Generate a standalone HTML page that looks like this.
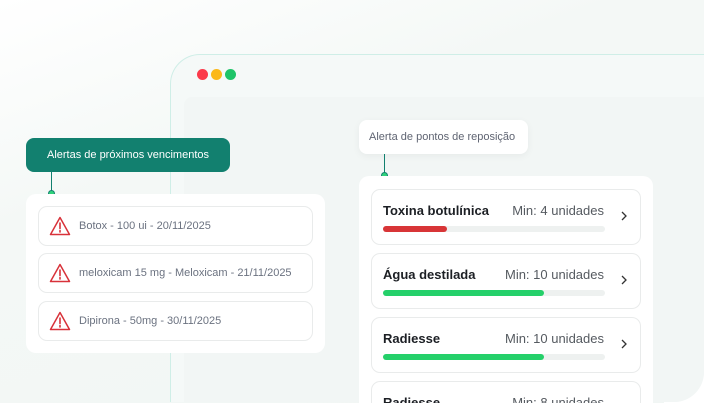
<!DOCTYPE html>
<html><head><meta charset="utf-8"><style>
*{margin:0;padding:0;box-sizing:border-box}
html,body{width:704px;height:403px;overflow:hidden}
body{position:relative;font-family:"Liberation Sans",sans-serif;background:linear-gradient(160deg,#fff 0%,#f4f8f6 35%,#f1f6f4 100%)}
.wc{position:absolute;right:0;bottom:0;width:40px;height:40px;background:#fff}
.frame{position:absolute;left:170px;top:54px;width:534px;height:348px;border:1px solid #cfeee7;border-right:none;border-bottom:none;border-radius:30px 0 30px 0;background:#f5f9f8;overflow:hidden}
.inner{position:absolute;left:13px;top:42px;right:0;bottom:0;background:#f2f6f5;border-radius:8px 0 0 0}
.dot{position:absolute;top:69px;width:11px;height:11px;border-radius:50%}
.tip{position:absolute;border-radius:8px;font-size:11px}
.card{position:absolute;background:#fff;border-radius:10px;overflow:hidden}
.it{position:absolute;left:12px;right:12px;border:1px solid #e9ebeb;border-radius:9px;background:#fff}
.l .it{height:40px;font-size:11px;color:#6b7280}
.l .it svg{position:absolute;left:10px;top:9px}
.l .it span{position:absolute;left:40px;top:13px}
.r .it{height:56px}
.r b{position:absolute;left:11px;top:13px;font-size:13px;color:#1c1f24}
.r .m{position:absolute;right:36px;top:13px;font-size:13px;color:#555a60}
.bar{position:absolute;left:11px;top:36px;width:222px;height:6px;border-radius:3px;background:#eef1f0}
.bar i{display:block;height:6px;border-radius:3px}
.ch{position:absolute;right:12px;top:20px}
.line{position:absolute;width:1px;background:#12806f}
.pin{position:absolute;width:7px;height:7px;border-radius:50%;background:#2fd27a;border:1px solid #12806f}
</style></head><body>
<div class="wc"></div>
<div class="frame"><div class="inner"></div></div>
<div class="dot" style="left:197px;background:#fb3a4a"></div>
<div class="dot" style="left:211px;background:#fbb818"></div>
<div class="dot" style="left:225px;background:#1ec468"></div>

<div class="tip" style="left:26px;top:138px;width:204px;height:34px;background:#12806f;color:#fff;line-height:34px;text-align:center">Alertas de próximos vencimentos</div>
<div class="line" style="left:51px;top:172px;height:20px"></div>
<div class="pin" style="left:48px;top:190px"></div>

<div class="card l" style="left:26px;top:194px;width:299px;height:159px">
<div class="it" style="top:12px"><svg width="22" height="20" viewBox="0 0 22 20"><path d="M11 1.5 L20.5 18.5 H1.5 Z" fill="none" stroke="#d8323a" stroke-width="1.5" stroke-linejoin="round"/><path d="M11 7v5.5M11 14.5v1.5" stroke="#d8323a" stroke-width="1.6" stroke-linecap="round"/></svg><span>Botox - 100 ui - 20/11/2025</span></div>
<div class="it" style="top:59px"><svg width="22" height="20" viewBox="0 0 22 20"><path d="M11 1.5 L20.5 18.5 H1.5 Z" fill="none" stroke="#d8323a" stroke-width="1.5" stroke-linejoin="round"/><path d="M11 7v5.5M11 14.5v1.5" stroke="#d8323a" stroke-width="1.6" stroke-linecap="round"/></svg><span>meloxicam 15 mg - Meloxicam - 21/11/2025</span></div>
<div class="it" style="top:107px"><svg width="22" height="20" viewBox="0 0 22 20"><path d="M11 1.5 L20.5 18.5 H1.5 Z" fill="none" stroke="#d8323a" stroke-width="1.5" stroke-linejoin="round"/><path d="M11 7v5.5M11 14.5v1.5" stroke="#d8323a" stroke-width="1.6" stroke-linecap="round"/></svg><span>Dipirona - 50mg - 30/11/2025</span></div>
</div>

<div class="tip" style="left:359px;top:120px;width:169px;height:34px;background:#fff;color:#5f6472;font-size:11px;line-height:34px;padding-left:10px;box-shadow:0 2px 8px rgba(0,0,0,.05)">Alerta de pontos de reposição</div>
<div class="line" style="left:384px;top:154px;height:20px"></div>
<div class="pin" style="left:381px;top:172px"></div>

<div class="card r" style="left:359px;top:176px;width:294px;height:227px;border-radius:10px 10px 0 0">
<div class="it" style="top:13px"><b>Toxina botulínica</b><span class="m">Min: 4 unidades</span><div class="bar"><i style="width:64px;background:#d83537"></i></div><svg class="ch" width="8" height="12" viewBox="0 0 8 12"><path d="M2 2l4 4-4 4" fill="none" stroke="#333" stroke-width="1.3"/></svg></div>
<div class="it" style="top:77px"><b>Água destilada</b><span class="m">Min: 10 unidades</span><div class="bar"><i style="width:161px;background:#25d06a"></i></div><svg class="ch" width="8" height="12" viewBox="0 0 8 12"><path d="M2 2l4 4-4 4" fill="none" stroke="#333" stroke-width="1.3"/></svg></div>
<div class="it" style="top:141px"><b>Radiesse</b><span class="m">Min: 10 unidades</span><div class="bar"><i style="width:161px;background:#25d06a"></i></div><svg class="ch" width="8" height="12" viewBox="0 0 8 12"><path d="M2 2l4 4-4 4" fill="none" stroke="#333" stroke-width="1.3"/></svg></div>
<div class="it" style="top:205px"><b>Radiesse</b><span class="m">Min: 8 unidades</span></div>
</div>
</body></html>
